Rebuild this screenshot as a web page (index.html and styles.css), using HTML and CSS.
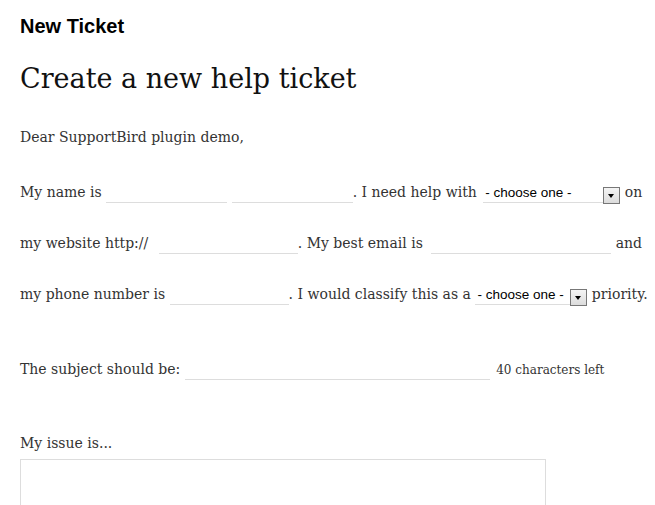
FILE: index.html
```html
<!DOCTYPE html>
<html lang="en">
<head>
    <meta charset="UTF-8">
    <meta name="viewport" content="width=device-width, initial-scale=1.0">
    <title>New Ticket</title>
    <link rel="stylesheet" href="styles.css">
</head>
<body>
    <h2 class="page-title">New Ticket</h2>
    <h1 class="form-title">Create a new help ticket</h1>

    <form class="ticket-form">
        <p class="greeting">Dear SupportBird plugin demo,</p>

        <p class="madlib">
            My name is
            <input type="text" class="blank w-name">
            <input type="text" class="blank w-name">. I need help with
            <span class="pick w-topic">
                <select><option>- choose one -</option></select><span class="pick-arrow"></span>
            </span> on<br>
            my website http://
            <input type="text" class="blank w-site">. My best email is
            <input type="text" class="blank w-email"> and<br>
            my phone number is
            <input type="text" class="blank w-phone">. I would classify this as a
            <span class="pick w-priority">
                <select><option>- choose one -</option></select><span class="pick-arrow"></span>
            </span> priority.
        </p>

        <p class="subject-line">
            The subject should be:
            <input type="text" class="blank w-subject" maxlength="40">
            <span class="chars-left">40 characters left</span>
        </p>

        <p class="issue-label">My issue is...</p>
        <textarea class="issue-box"></textarea>
    </form>
</body>
</html>
```

FILE: styles.css
```css
body {
    margin: 0;
    padding: 0 20px;
    background-color: white;
    color: #333;
    font-family: "DejaVu Serif", Georgia, serif;
    font-size: 14px;
}
.page-title {
    font-family: "Liberation Sans", Arial, sans-serif;
    font-size: 20px;
    font-weight: bold;
    color: #000;
    margin: 15px 0 0 0;
}
.form-title {
    font-weight: normal;
    font-size: 27px;
    color: #111;
    margin: 25px 0 0 0;
}
.greeting {
    margin: 35px 0 0 0;
}
.madlib {
    line-height: 51px;
    margin: 22px 0 0 0;
    white-space: nowrap;
}
.blank {
    font-family: inherit;
    font-size: 13px;
    border: none;
    border-bottom: 1px solid #ddd;
    padding: 2px 0;
    margin: 0;
    outline: none;
    background: transparent;
}
.w-name { width: 121px; }
.w-site { width: 139px; margin-left: 6px; }
.w-email { width: 180px; margin-left: 4px; }
.w-phone { width: 119px; }
.w-subject { width: 305px; }
.pick {
    display: inline-flex;
    align-items: flex-end;
    line-height: normal;
    vertical-align: 0;
    margin-left: 2px;
}
.pick select {
    appearance: none;
    -webkit-appearance: none;
    font-family: "Liberation Sans", Arial, sans-serif;
    font-size: 13.5px;
    color: #000;
    border: none;
    border-bottom: 1px solid #ddd;
    background: transparent;
    padding: 0 0 1px 2px;
    height: 19px;
    outline: none;
}
.w-topic select { width: 120px; }
.w-priority { margin-left: 0; }
.w-priority select { width: 95px; }
.pick-arrow {
    position: relative;
    width: 15px;
    height: 15px;
    margin-bottom: -1px;
    border: 1px solid #777;
    background: linear-gradient(#f4f4f4, #dcdcdc);
}
.pick-arrow::after {
    content: "";
    position: absolute;
    left: 4px;
    top: 6px;
    border-left: 3.5px solid transparent;
    border-right: 3.5px solid transparent;
    border-top: 4px solid #000;
}
.subject-line {
    margin: 40px 0 0 0;
}
.chars-left {
    font-size: 12px;
    margin-left: 2px;
}
.issue-label {
    margin: 55px 0 0 0;
}
.issue-box {
    display: block;
    width: 524px;
    height: 120px;
    margin-top: 8px;
    border: 1px solid #ddd;
    padding: 0;
    resize: none;
}
```
